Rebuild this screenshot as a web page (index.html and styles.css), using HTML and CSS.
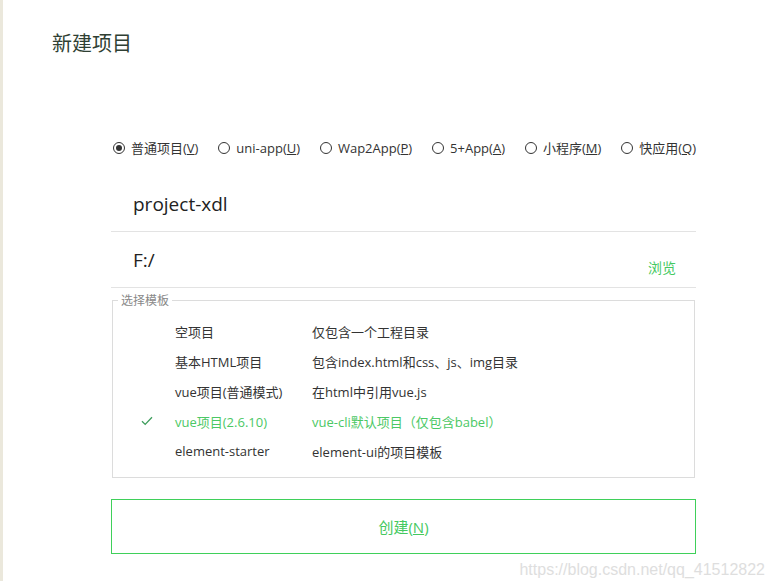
FILE: index.html
```html
<!DOCTYPE html>
<html lang="zh-CN">
<head>
    <meta charset="UTF-8">
    <title>新建项目</title>
    <link rel="stylesheet" href="styles.css">
</head>
<body>
<div class="window">
    <h2 class="title">新建项目</h2>
    <div class="form">
        <div class="types">
            <label class="type"><span class="radio checked"></span><span>普通项目(<u>V</u>)</span></label>
            <label class="type"><span class="radio"></span><span>uni-app(<u>U</u>)</span></label>
            <label class="type"><span class="radio"></span><span>Wap2App(<u>P</u>)</span></label>
            <label class="type"><span class="radio"></span><span>5+App(<u>A</u>)</span></label>
            <label class="type"><span class="radio"></span><span>小程序(<u>M</u>)</span></label>
            <label class="type"><span class="radio"></span><span>快应用(<u>Q</u>)</span></label>
        </div>
        <div class="field first">
            <span class="value">project-xdl</span>
        </div>
        <div class="field">
            <span class="value">F:/</span>
            <a class="browse">浏览</a>
        </div>
        <fieldset class="templates">
            <legend>选择模板</legend>
            <div class="tpl"><span class="check"></span><span>空项目</span><span>仅包含一个工程目录</span></div>
            <div class="tpl"><span class="check"></span><span>基本HTML项目</span><span>包含index.html和css、js、img目录</span></div>
            <div class="tpl"><span class="check"></span><span>vue项目(普通模式)</span><span>在html中引用vue.js</span></div>
            <div class="tpl selected">
                <span class="check">
                    <svg width="12" height="10" viewBox="0 0 12 10"><path d="M1 5.2 L4.2 8.4 L11 1.2" fill="none" stroke="#3d9d5c" stroke-width="1.3"/></svg>
                </span>
                <span>vue项目(2.6.10)</span><span>vue-cli默认项目（仅包含babel）</span>
            </div>
            <div class="tpl"><span class="check"></span><span>element-starter</span><span>element-ui的项目模板</span></div>
        </fieldset>
        <div class="create">创建(<u>N</u>)</div>
    </div>
    <div class="watermark">https://blog.csdn.net/qq_41512822</div>
</div>
</body>
</html>
```
FILE: styles.css
```css
* { box-sizing: border-box; }
body {
    margin: 0;
    background: #fff;
    font-family: "Open Sans", "Noto Sans CJK SC", sans-serif;
    color: #333;
}
.window {
    position: relative;
    height: 581px;
    border-left: 3px solid #ebe8dc;
    padding: 29px 0 0 49px;
    overflow: hidden;
}
.title {
    margin: 0;
    font-size: 20px;
    font-weight: normal;
    line-height: 30px;
    color: #2f3f33;
}
.form {
    width: 585px;
    margin: 80px 0 0 59px;
}
.types {
    display: flex;
    justify-content: space-between;
    font-size: 13px;
    line-height: 18px;
    padding-left: 2px;
    color: #333;
}
.type {
    display: flex;
    align-items: center;
    gap: 6px;
}
.radio {
    width: 12px;
    height: 12px;
    border: 1px solid #333;
    border-radius: 50%;
    position: relative;
}
.radio.checked::after {
    content: "";
    position: absolute;
    left: 2px;
    top: 2px;
    width: 6px;
    height: 6px;
    border-radius: 50%;
    background: #333;
}
.field {
    display: flex;
    align-items: center;
    justify-content: space-between;
    height: 56px;
    border-bottom: 1px solid #e3e3e3;
    padding: 0 20px 0 22px;
}
.field.first {
    margin-top: 19px;
}
.value {
    font-size: 19px;
    color: #222;
}
.browse {
    font-size: 14px;
    color: #45c95f;
    margin-top: 14px;
}
.templates {
    margin: 3px 1px 0;
    border: 1px solid #dcdcdc;
    padding: 7px 0 11px;
    font-size: 13px;
}
.templates legend {
    margin-left: 5px;
    padding: 0 3px;
    font-size: 12px;
    color: #888;
}
.tpl {
    display: grid;
    grid-template-columns: 62px 137px 1fr;
    height: 30px;
    align-items: center;
    color: #333;
}
.check {
    padding-left: 28px;
    display: flex;
    align-items: center;
}
.tpl.selected {
    color: #4bc865;
}
.create {
    display: flex;
    align-items: center;
    justify-content: center;
    height: 55px;
    margin-top: 21px;
    background: #fff;
    box-shadow: inset 0 0 0 1px #3fd05a;
    color: #45c95f;
    font-size: 15px;
}
.watermark {
    position: absolute;
    right: 4px;
    bottom: 2px;
    font-family: "Liberation Sans", Arial, sans-serif;
    font-size: 16px;
    color: #dedede;
}
```
